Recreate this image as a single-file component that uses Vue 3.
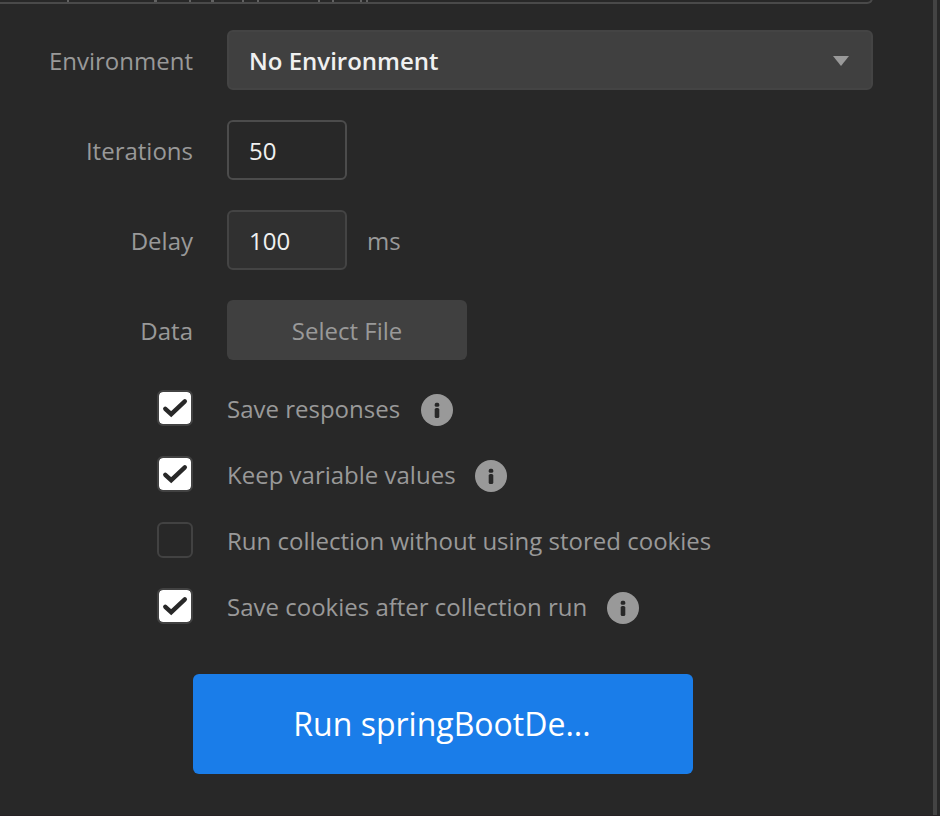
<script setup>
import { ref } from 'vue'

const iterations = ref('50')
const delay = ref('100')
const options = ref([
  { label: 'Save responses', checked: true, info: true },
  { label: 'Keep variable values', checked: true, info: true },
  { label: 'Run collection without using stored cookies', checked: false, info: false },
  { label: 'Save cookies after collection run', checked: true, info: true },
])
</script>

<template>
  <div class="runner">
    <main class="panel">
      <div class="list-edge">
        <svg width="400" height="2" viewBox="0 0 400 2" fill="#626262">
          <path d="M67 0h2v2h-2zM154 0h3v2h-3zM189 0h2v2h-2zM211 0h3v2h-3zM242 0h2v2h-2zM257 0h2v2h-2zM318 0h2v2h-2zM332 0h2v2h-2zM360 0h2v2h-2zM366 0h2v2h-2z" />
        </svg>
      </div>

      <div class="fields">
        <div class="row">
          <span class="label">Environment</span>
          <div class="select">
            <span>No Environment</span>
            <svg width="16" height="10" viewBox="0 0 16 10"><path d="M0 0h16L8 10z" fill="#999" /></svg>
          </div>
        </div>
        <div class="row">
          <label class="label" for="iterations">Iterations</label>
          <input id="iterations" v-model="iterations" class="input focused" type="text" />
        </div>
        <div class="row">
          <label class="label" for="delay">Delay</label>
          <input id="delay" v-model="delay" class="input" type="text" />
          <span class="unit">ms</span>
        </div>
        <div class="row">
          <span class="label">Data</span>
          <button class="file" type="button">Select File</button>
        </div>
      </div>

      <div class="options">
        <div v-for="o in options" :key="o.label" class="option" @click="o.checked = !o.checked">
          <span class="box" :class="{ checked: o.checked }">
            <svg v-if="o.checked" width="32" height="32" viewBox="0 0 32 32">
              <path d="M6.3 16.8L12.2 22.2L25.8 9.3" fill="none" stroke="#282828" stroke-width="4.4" stroke-linecap="round" />
            </svg>
          </span>
          <span class="text">{{ o.label }}</span>
          <svg v-if="o.info" class="info" width="32" height="32" viewBox="0 0 32 32">
            <circle cx="16" cy="16" r="16" fill="#999" />
            <rect x="13.7" y="8.8" width="4.6" height="4" rx="1.6" fill="#282828" />
            <rect x="13.7" y="14" width="4.6" height="10" rx="1.6" fill="#282828" />
          </svg>
        </div>
      </div>

      <button class="run" type="button">Run springBootDe...</button>
    </main>
    <div class="divider"></div>
  </div>
</template>

<style>
body {
  background: #282828;
}
</style>

<style scoped>
.runner {
  box-sizing: border-box;
  display: flex;
  height: 816px;
  padding-right: 3px;
  overflow: hidden;
  background: #282828;
  border-bottom: 1px solid #272225;
  color: #999;
  font: 24px/34px "Open Sans", sans-serif;
}
.panel {
  flex: 1;
}
.divider {
  width: 4px;
  background: #444;
}
.list-edge {
  box-sizing: border-box;
  width: 873px;
  height: 14px;
  margin-top: -10px;
  padding-top: 10px;
  overflow: hidden;
  border: solid #4a4a4a;
  border-width: 0 2px 2px 0;
  border-bottom-right-radius: 6px;
}
.list-edge svg {
  display: block;
}
.fields {
  display: flex;
  flex-direction: column;
  gap: 30px;
  padding-top: 26px;
}
.row {
  display: flex;
  align-items: center;
  height: 60px;
}
.label {
  width: 193px;
  margin-right: 34px;
  padding-top: 2px;
  text-align: right;
}
.select,
.input,
.file {
  box-sizing: border-box;
  height: 60px;
  border: 2px solid #444;
  border-radius: 6px;
  font: inherit;
}
.select {
  display: flex;
  align-items: center;
  justify-content: space-between;
  width: 646px;
  padding: 2px 22px 0 20px;
  background: #404040;
  color: #f0f0f0;
  font-weight: 600;
}
.input {
  width: 120px;
  padding: 0 20px;
  outline: none;
  background: #303030;
  color: #f0f0f0;
}
.input.focused {
  border-color: #4c4c4c;
  background: #282828;
}
.unit {
  margin-left: 20px;
  padding-top: 2px;
}
.file {
  width: 240px;
  padding: 2px 0 0;
  border: 0;
  background: #404040;
  color: #999;
}
.options {
  display: flex;
  flex-direction: column;
  gap: 30px;
  padding: 30px 0 0 157px;
}
.option {
  display: flex;
  align-items: center;
  height: 36px;
}
.box {
  box-sizing: border-box;
  width: 36px;
  height: 36px;
  margin-right: 34px;
  border: 2px solid #424242;
  border-radius: 6px;
}
.box.checked {
  background: #fff;
  background-clip: padding-box;
}
.box svg {
  display: block;
}
.text {
  padding-top: 2px;
}
.info {
  margin: 4px 0 0 20px;
}
.option:nth-child(1) .info {
  margin-left: 21px;
}
.option:nth-child(2) .info {
  margin-left: 19px;
}
.run {
  display: block;
  width: 500px;
  height: 100px;
  margin: 50px 0 0 193px;
  padding: 0 2px 0 0;
  border: 0;
  border-radius: 6px;
  background: #1a7de9;
  color: #fff;
  font: 32px/44px "Open Sans", sans-serif;
}
</style>
